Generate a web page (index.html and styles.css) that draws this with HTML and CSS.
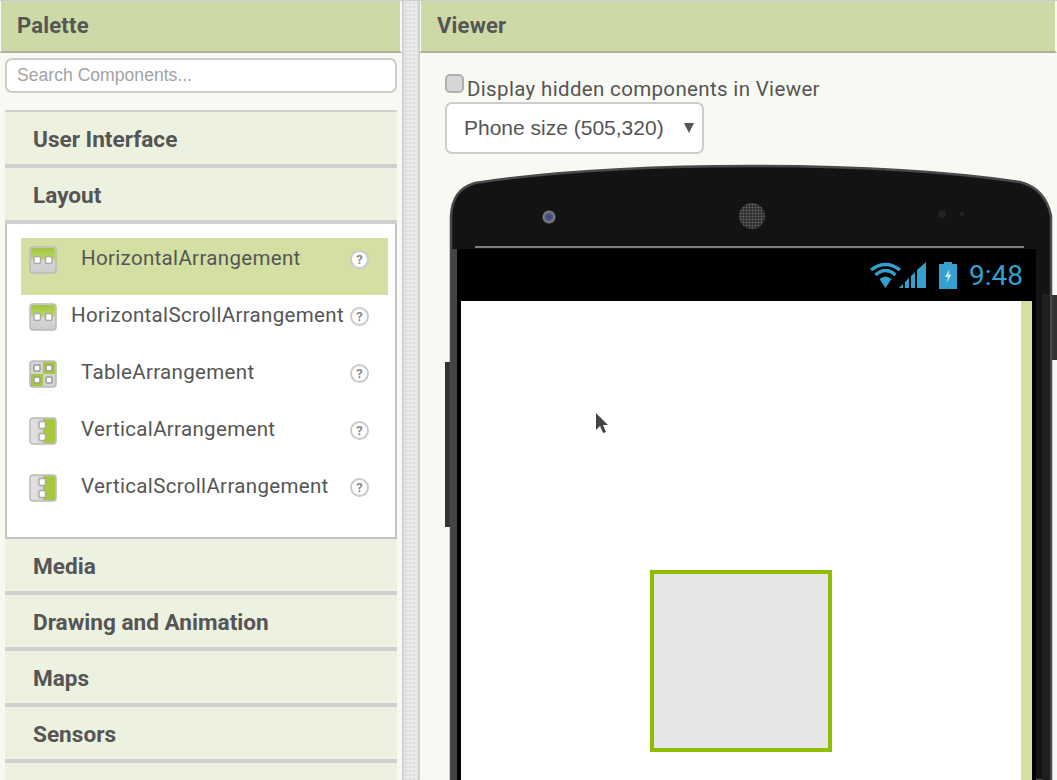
FILE: index.html
```html
<!DOCTYPE html>
<html lang="en">
<head>
    <meta charset="UTF-8">
    <meta name="viewport" content="width=device-width, initial-scale=1.0">
    <title>Designer</title>
    <link rel="stylesheet" href="styles.css">
</head>
<body>
    <svg class="defs" width="0" height="0">
        <defs>
            <linearGradient id="greyFill" x1="0" y1="0" x2="0" y2="1">
                <stop offset="0" stop-color="#e8e8e8"/>
                <stop offset="1" stop-color="#cbcbcb"/>
            </linearGradient>
            <linearGradient id="greenFill" x1="0" y1="0" x2="0" y2="1">
                <stop offset="0" stop-color="#a0c63c"/>
                <stop offset="1" stop-color="#bfd96e"/>
            </linearGradient>
            <linearGradient id="sideFill" x1="0" y1="0" x2="1" y2="0">
                <stop offset="0" stop-color="#e4e4e4"/>
                <stop offset="1" stop-color="#c6c6c6"/>
            </linearGradient>
            <symbol id="icon-horizontal" viewBox="0 0 28 28">
                <rect x="1" y="1" width="26" height="26" rx="3" fill="url(#greyFill)" stroke="#bbb" stroke-width="1.5"/>
                <path d="M2 4 Q2 2 4 2 H24 Q26 2 26 4 V14 H2 Z" fill="url(#greenFill)"/>
                <rect x="5" y="10.5" width="6.5" height="7" rx="1.5" fill="#fff" stroke="#aaa" stroke-width="1.5"/>
                <rect x="16.5" y="10.5" width="6.5" height="7" rx="1.5" fill="#fff" stroke="#aaa" stroke-width="1.5"/>
            </symbol>
            <symbol id="icon-table" viewBox="0 0 28 28">
                <rect x="1" y="1" width="26" height="26" rx="3" fill="#d2d2d2" stroke="#bbb" stroke-width="1.5"/>
                <rect x="14" y="2" width="12" height="12" fill="#a5c83c"/>
                <rect x="2" y="14" width="12" height="12" fill="#a5c83c"/>
                <rect x="5" y="5" width="6" height="6" rx="1.5" fill="#fff" stroke="#999" stroke-width="1.5"/>
                <rect x="17" y="5" width="6" height="6" rx="1.5" fill="#fff" stroke="#999" stroke-width="1.5"/>
                <rect x="5" y="17" width="6" height="6" rx="1.5" fill="#fff" stroke="#999" stroke-width="1.5"/>
                <rect x="17" y="17" width="6" height="6" rx="1.5" fill="#fff" stroke="#999" stroke-width="1.5"/>
            </symbol>
            <symbol id="icon-vertical" viewBox="0 0 28 28">
                <rect x="1" y="1" width="26" height="26" rx="3" fill="url(#sideFill)" stroke="#bbb" stroke-width="1.5"/>
                <path d="M14 2 H24 Q26 2 26 4 V24 Q26 26 24 26 H14 Z" fill="#a5c83c"/>
                <rect x="10" y="4.5" width="6.5" height="7" rx="1.5" fill="#fff" stroke="#aaa" stroke-width="1.5"/>
                <rect x="10" y="16.5" width="6.5" height="7" rx="1.5" fill="#fff" stroke="#aaa" stroke-width="1.5"/>
            </symbol>
        </defs>
    </svg>

    <div class="app">
        <div class="palette">
            <div class="panel-head">Palette</div>
            <div class="palette-body">
                <input class="search" type="text" placeholder="Search Components...">
                <div class="drawer-title first">User Interface</div>
                <div class="drawer-title">Layout</div>
                <div class="drawer-panel">
                    <div class="item selected">
                        <svg class="item-icon"><use href="#icon-horizontal"/></svg>
                        <span class="item-label">HorizontalArrangement</span>
                        <span class="help">?</span>
                    </div>
                    <div class="item">
                        <svg class="item-icon"><use href="#icon-horizontal"/></svg>
                        <span class="item-label long">HorizontalScrollArrangement</span>
                        <span class="help">?</span>
                    </div>
                    <div class="item">
                        <svg class="item-icon"><use href="#icon-table"/></svg>
                        <span class="item-label">TableArrangement</span>
                        <span class="help">?</span>
                    </div>
                    <div class="item">
                        <svg class="item-icon"><use href="#icon-vertical"/></svg>
                        <span class="item-label">VerticalArrangement</span>
                        <span class="help">?</span>
                    </div>
                    <div class="item">
                        <svg class="item-icon"><use href="#icon-vertical"/></svg>
                        <span class="item-label">VerticalScrollArrangement</span>
                        <span class="help">?</span>
                    </div>
                </div>
                <div class="drawer-title">Media</div>
                <div class="drawer-title">Drawing and Animation</div>
                <div class="drawer-title">Maps</div>
                <div class="drawer-title">Sensors</div>
                <div class="drawer-title"></div>
            </div>
        </div>

        <div class="splitter"></div>

        <div class="viewer">
            <div class="panel-head">Viewer</div>
            <div class="viewer-body">
                <label class="hidden-toggle">
                    <span class="fake-check"></span>Display hidden components in Viewer
                </label>
                <div class="size-select">
                    <span>Phone size (505,320)</span>
                    <span class="size-arrow"></span>
                </div>

                <div class="phone">
                    <!-- phone body sits behind the screen -->
                    <svg class="phone-shell" width="612" height="616" viewBox="0 0 612 616">
                        <defs>
                            <radialGradient id="lens">
                                <stop offset="0" stop-color="#2c3f9e"/>
                                <stop offset="0.4" stop-color="#4a5078"/>
                                <stop offset="0.8" stop-color="#808084"/>
                                <stop offset="1" stop-color="#222"/>
                            </radialGradient>
                            <pattern id="mesh" width="3" height="3" patternUnits="userSpaceOnUse">
                                <rect width="3" height="3" fill="#2a2a2a"/>
                                <circle cx="1.5" cy="1.5" r="1" fill="#666"/>
                            </pattern>
                        </defs>
                        <rect x="0" y="198" width="6" height="165" fill="#333"/>
                        <rect x="606" y="131" width="6" height="65" fill="#333"/>
                        <path d="M6 616 V52 C7 34 14 24 30 19 C110 7 210 2 305 2 C400 2 500 7 575 18 C590 22 602 32 606 52 V616 Z" fill="#131313" stroke="#4a4a4a" stroke-width="2.5"/>
                        <rect x="6" y="85" width="6" height="531" fill="#444"/>
                        <rect x="597" y="130" width="8" height="486" fill="#1f1f1f"/>
                        <line x1="30" y1="83" x2="579" y2="83" stroke="#a5a5a5" stroke-width="1.5"/>
                        <circle cx="104" cy="53" r="7" fill="url(#lens)"/>
                        <circle cx="307" cy="52" r="13" fill="url(#mesh)"/>
                        <circle cx="497" cy="50" r="4" fill="#232323"/>
                        <circle cx="517" cy="50" r="2" fill="#232323"/>
                    </svg>

                    <div class="device">
                        <div class="status-bar">
                            <svg class="status-icon" width="33" height="26" viewBox="0 0 33 26">
                                <path d="M2 8 Q16.5 -3 31 8 M6.5 13 Q16.5 4 26.5 13" fill="none" stroke="#33a0cf" stroke-width="3.2"/>
                                <path d="M10.5 17 Q16.5 12 22.5 17 L16.5 26 Z" fill="#33a0cf"/>
                            </svg>
                            <svg class="status-icon signal" width="27" height="26" viewBox="0 0 27 26">
                                <path d="M0 26 L4 22 V26 Z M6 26 V20 L10 16 V26 Z M12 26 V14 L16 10 V26 Z M18 26 V8 L27 0 V26 Z" fill="#33a0cf"/>
                            </svg>
                            <svg class="status-icon battery" width="18" height="27" viewBox="0 0 18 27">
                                <path d="M5 0 H13 V2 H18 V27 H0 V2 H5 Z" fill="#33a0cf"/>
                                <path d="M10.5 7 L6 15 H9 L7.5 21 L12.5 12.5 H9.5 Z" fill="#d5ebf4"/>
                            </svg>
                            <span class="clock">9:48</span>
                        </div>
                        <div class="form-area">
                            <div class="form">
                                <div class="arrangement"></div>
                                <svg class="cursor" width="14" height="22" viewBox="0 0 14 22">
                                    <path d="M1 0 V17 L5 13 L8 20 L11 19 L8 12 H13 Z" fill="#444"/>
                                </svg>
                            </div>
                            <div class="scrollbar"></div>
                        </div>
                    </div>
                </div>
            </div>
        </div>
    </div>
</body>
</html>
```

FILE: styles.css
```css
* {
    box-sizing: border-box;
}
html, body {
    margin: 0;
    height: 780px;
    overflow: hidden;
}
body {
    background-color: #f7f9f2;
    font-family: Roboto, "Liberation Sans", sans-serif;
    color: #555;
}
.defs {
    position: absolute;
}
.app {
    display: grid;
    grid-template-columns: 402px 18px 1fr;
    height: 780px;
    border-top: 1px solid #ccc;
}
.panel-head {
    height: 52px;
    padding-left: 16px;
    line-height: 50px;
    font-size: 22px;
    font-weight: 700;
    letter-spacing: 0.2px;
    background-color: #cddaa8;
    background-clip: padding-box;
    border-left: 1px solid transparent;
    border-right: 2px solid transparent;
    border-bottom: 2px solid #aab09a;
}
.palette-body {
    padding: 5px 5px 0;
}
.search {
    display: block;
    width: 100%;
    height: 35px;
    padding: 0 10px;
    border: 2px solid #ccc;
    border-radius: 7px;
    background: #fff;
    font-family: "Liberation Sans", sans-serif;
    font-size: 17.6px;
}
.search::placeholder {
    color: #a3a3a3;
    opacity: 1;
}
.drawer-title {
    height: 56px;
    padding-left: 28px;
    line-height: 56px;
    font-size: 22.6px;
    font-weight: 700;
    background-color: #edf1e0;
    border-bottom: 4px solid #d0d0d0;
}
.drawer-title.first {
    height: 58px;
    margin-top: 17px;
    border-top: 2px solid #d0d0d0;
}
.drawer-panel {
    padding: 14px 7px 14px 14px;
    background-color: #fff;
    border: 2px solid #c4c4c4;
    border-top: 0;
}
.item {
    display: flex;
    height: 57px;
    padding: 8px 0 0 8px;
    font-size: 20.5px;
    letter-spacing: 0.33px;
}
.item.selected {
    background-color: #d3dfa3;
}
.item-icon {
    flex: none;
    width: 28px;
    height: 28px;
    filter: blur(0.4px);
}
.item-label {
    flex: 1;
    margin-left: 24px;
    line-height: 24px;
    white-space: nowrap;
}
.item-label.long {
    margin-left: 14px;
}
.help {
    flex: none;
    width: 19px;
    height: 19px;
    margin: 4px 19px 0 0;
    border: 2px solid #cbcbcb;
    border-radius: 50%;
    background-color: #fff;
    line-height: 15px;
    text-align: center;
    font-size: 13px;
    font-weight: 700;
    letter-spacing: 0;
    color: #888;
}
.splitter {
    background-color: #e9e9e9;
    background-image: radial-gradient(#d9d9d9 1px, transparent 1px);
    background-size: 4px 4px;
    border-left: 2px solid #d0d0d0;
    border-right: 2px solid #d0d0d0;
}
.viewer-body {
    padding: 21px 0 0 25px;
}
.hidden-toggle {
    display: flex;
    height: 28px;
    line-height: 30px;
    font-size: 20.5px;
    letter-spacing: 0.34px;
}
.fake-check {
    flex: none;
    width: 19px;
    height: 19px;
    margin: 0 3px 0 0;
    background-color: #d6d6d6;
    border: 2px solid #b0b0b0;
    border-radius: 5px;
}
.size-select {
    position: relative;
    width: 259px;
    height: 52px;
    padding-left: 17px;
    line-height: 47px;
    font-family: "Liberation Sans", sans-serif;
    font-size: 21px;
    background-color: #fff;
    border: 2px solid #ccc;
    border-radius: 7px;
}
.size-arrow {
    position: absolute;
    left: 237px;
    top: 19px;
    width: 0;
    height: 0;
    border-left: 5px solid transparent;
    border-right: 5px solid transparent;
    border-top: 10px solid #555;
}
.phone {
    position: relative;
    height: 616px;
    margin-top: 10px;
    padding: 85px 0 0 12px;
}
.phone-shell {
    position: absolute;
    left: 0;
    top: 0;
}
.device {
    position: relative;
    width: 579px;
    height: 531px;
    padding: 0 4px;
    background-color: #000;
}
.status-bar {
    display: flex;
    justify-content: flex-end;
    align-items: center;
    height: 52px;
    padding-right: 9px;
}
.status-icon {
    filter: blur(0.4px);
}
.status-icon.signal {
    margin-left: -3px;
}
.status-icon.battery {
    margin-left: 13px;
}
.clock {
    margin-left: 12px;
    font-size: 28px;
    color: #33a0cf;
}
.form-area {
    display: flex;
    height: 479px;
}
.form {
    position: relative;
    flex: 1;
    display: flex;
    justify-content: center;
    padding-top: 269px;
    background-color: #fff;
}
.scrollbar {
    flex: none;
    width: 11px;
    background-color: #d3dfa3;
}
.arrangement {
    width: 182px;
    height: 182px;
    background-color: #e6e6e6;
    border: 4px solid #8fbe00;
}
.cursor {
    position: absolute;
    left: 134px;
    top: 112px;
}
```
